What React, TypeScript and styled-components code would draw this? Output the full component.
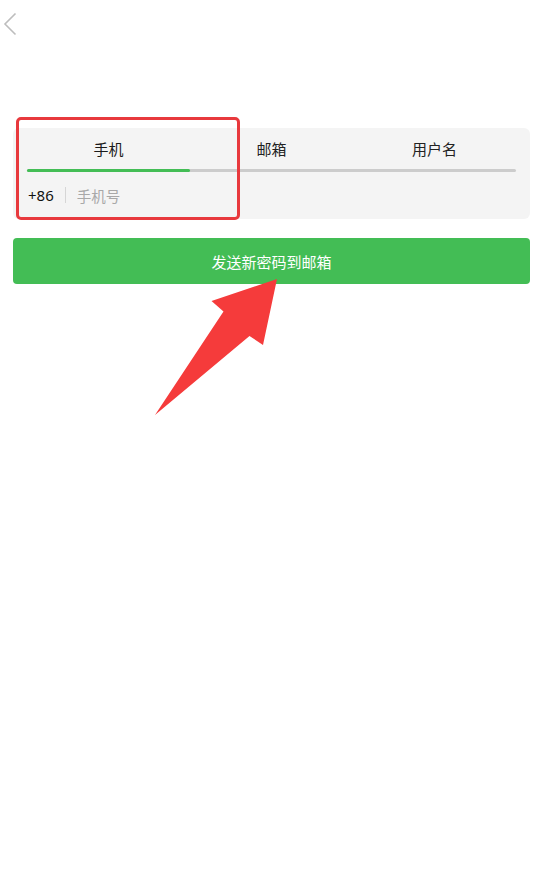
import React, { useState } from "react";
import styled, { createGlobalStyle } from "styled-components";

const GlobalStyle = createGlobalStyle`
  html, body {
    margin: 0;
    padding: 0;
    background: #ffffff;
    font-family: "Noto Sans CJK SC", "Noto Sans", sans-serif;
  }
`;

const Page = styled.div`
  position: relative;
  width: 541px;
  min-height: 869px;
  background: #ffffff;
`;

const Header = styled.div`
  height: 48px;
  display: flex;
  align-items: center;
  padding-left: 3px;
`;

const BackButton = styled.button`
  border: none;
  background: none;
  padding: 0;
  width: 18px;
  height: 26px;
  display: flex;
  align-items: center;
  cursor: pointer;
`;

const Content = styled.div`
  padding: 80px 11px 0 13px;
`;

const Card = styled.div`
  background: #f4f4f4;
  border-radius: 6px;
  padding: 0 14px;
`;

const Tabs = styled.div`
  display: grid;
  grid-template-columns: repeat(3, 1fr);
  height: 41px;
`;

const Tab = styled.button<{ $active: boolean }>`
  border: none;
  background: none;
  font-family: inherit;
  font-size: 15px;
  color: ${(p) => (p.$active ? "#1a1a1a" : "#222222")};
  display: flex;
  align-items: center;
  justify-content: center;
  padding: 0;
  cursor: pointer;
`;

const Track = styled.div`
  height: 3px;
  background: #cccccc;
  border-radius: 2px;
  display: flex;
`;

const Indicator = styled.div`
  width: 33.333%;
  height: 100%;
  background: #43bd55;
  border-radius: 2px;
`;

const InputRow = styled.div`
  display: flex;
  align-items: center;
  height: 46px;
  padding-bottom: 1px;
  gap: 11px;
`;

const Prefix = styled.span`
  font-size: 15px;
  color: #111111;
  font-family: "Noto Sans", "Noto Sans CJK SC", sans-serif;
  padding-left: 1px;
`;

const Divider = styled.span`
  width: 1px;
  height: 16px;
  background: #d6d6d6;
`;

const PhoneInput = styled.input`
  flex: 1;
  border: none;
  background: transparent;
  outline: none;
  font-family: inherit;
  font-size: 14.5px;
  color: #222;
  padding: 0;

  &::placeholder {
    color: #a8a8a8;
  }
`;

const SubmitButton = styled.button`
  margin-top: 19px;
  width: 100%;
  height: 46px;
  border: none;
  border-radius: 4px;
  background: #43bd55;
  color: #ffffff;
  font-family: inherit;
  font-size: 15px;
  cursor: pointer;
`;

const Highlight = styled.div`
  position: absolute;
  left: 16px;
  top: 117px;
  width: 218px;
  height: 97px;
  border: 3px solid #e8393d;
  border-radius: 5px;
  pointer-events: none;
`;

const ArrowLayer = styled.svg`
  position: absolute;
  left: 0;
  top: 0;
  pointer-events: none;
`;

const tabs = ["手机", "邮箱", "用户名"];

export default function App() {
  const [active, setActive] = useState(0);
  const [phone, setPhone] = useState("");

  return (
    <Page>
      <GlobalStyle />
      <Header>
        <BackButton aria-label="返回">
          <svg width="14" height="24" viewBox="0 0 14 24">
            <path
              d="M12.5 1.5 L2 12 L12.5 22.5"
              fill="none"
              stroke="#bdbdbd"
              strokeWidth="1.6"
            />
          </svg>
        </BackButton>
      </Header>
      <Content>
        <Card>
          <Tabs>
            {tabs.map((t, i) => (
              <Tab key={t} $active={i === active} onClick={() => setActive(i)}>
                {t}
              </Tab>
            ))}
          </Tabs>
          <Track>
            <Indicator style={{ marginLeft: `${active * 33.333}%` }} />
          </Track>
          <InputRow>
            <Prefix>+86</Prefix>
            <Divider />
            <PhoneInput
              placeholder="手机号"
              value={phone}
              onChange={(e) => setPhone(e.target.value)}
            />
          </InputRow>
        </Card>
        <SubmitButton>发送新密码到邮箱</SubmitButton>
      </Content>
      <Highlight />
      <ArrowLayer width="541" height="869">
        <polygon
          points="277,279 263,345 249.5,336 155,415 223.5,311.5 211.5,301"
          fill="#f53b3b"
        />
      </ArrowLayer>
    </Page>
  );
}
